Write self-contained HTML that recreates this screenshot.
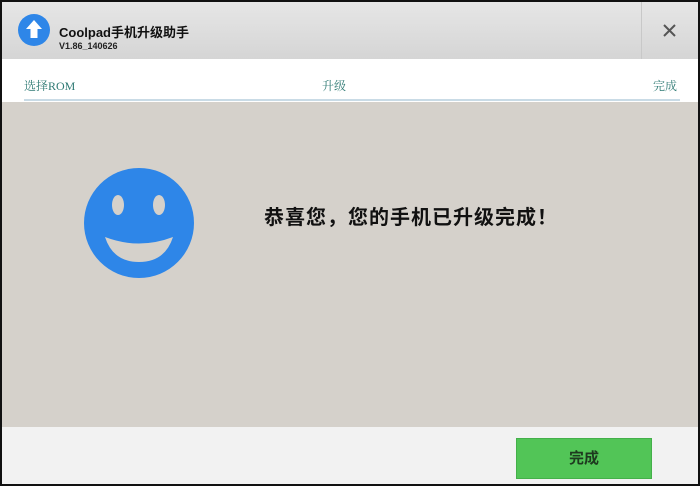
<!DOCTYPE html>
<html><head><meta charset="utf-8"><style>
*{margin:0;padding:0;box-sizing:border-box}
body{width:700px;height:486px;background:#111;position:relative;overflow:hidden;font-family:"Liberation Sans","Noto Sans CJK SC",sans-serif}
.win{position:absolute;left:2px;top:2px;width:696px;height:482px;background:#f2f2f2;overflow:hidden}
.hdr{position:absolute;left:0;top:0;width:696px;height:57px;background:linear-gradient(#e6e6e6,#d5d5d5)}
.sep{position:absolute;left:639px;top:0;width:1px;height:57px;background:#c8c8c8}
.nav{position:absolute;left:0;top:57px;width:696px;height:43px;background:#fff}
.nav span{position:absolute;top:18px;font-size:12px;color:#2f7a74;font-family:"Liberation Serif","Noto Serif CJK SC",serif}
.line{position:absolute;left:22px;top:97px;width:656px;height:2px;background:#c9dbe6}
.body{position:absolute;left:0;top:100px;width:696px;height:325px;background:#d5d1cb}
.btn{position:absolute;left:514px;top:436px;width:136px;height:41px;background:#52c557;border:1px solid #44b04a;text-align:center;line-height:40px;font-size:15px;font-weight:bold;color:#1e3a1f}
</style></head><body>
<div class="win">
<div class="hdr">
<svg style="position:absolute;left:16px;top:12px" width="32" height="32" viewBox="0 0 32 32"><circle cx="16" cy="16" r="16" fill="#2e86e8"/><path d="M16 6 L24 15 L19.5 15 L19.5 24 L12.5 24 L12.5 15 L8 15 Z" fill="#fff"/></svg>
<div style="position:absolute;left:57px;top:20px;font-size:13px;font-weight:bold;color:#111">Coolpad手机升级助手</div>
<div style="position:absolute;left:57px;top:39px;font-size:9px;font-weight:bold;color:#222">V1.86_140626</div>
<div class="sep"></div>
<svg style="position:absolute;left:661px;top:22px" width="13" height="13" viewBox="0 0 13 13"><path d="M1 1L12 12M12 1L1 12" stroke="#555" stroke-width="2"/></svg>
</div>
<div class="nav"><span style="left:22px">选择ROM</span><span style="left:320px">升级</span><span style="left:651px">完成</span></div>
<div class="line"></div>
<div class="body">
<svg style="position:absolute;left:78px;top:62px" width="116" height="116" viewBox="80 164 116 116"><circle cx="139" cy="223" r="55" fill="#2e86e8"/><ellipse cx="118" cy="205" rx="6" ry="10" fill="#d5d1cb"/><ellipse cx="159" cy="205" rx="6" ry="10" fill="#d5d1cb"/><path d="M105 237 Q139 250 173 237 Q165 262 139 262 Q113 262 105 237 Z" fill="#d5d1cb"/></svg>
<div style="position:absolute;left:262px;top:99px;font-size:20px;font-weight:bold;color:#111;letter-spacing:1px;white-space:nowrap">恭喜您，您的手机已升级完成！</div>
</div>
<div class="btn">完成</div>
</div>
</body></html>
